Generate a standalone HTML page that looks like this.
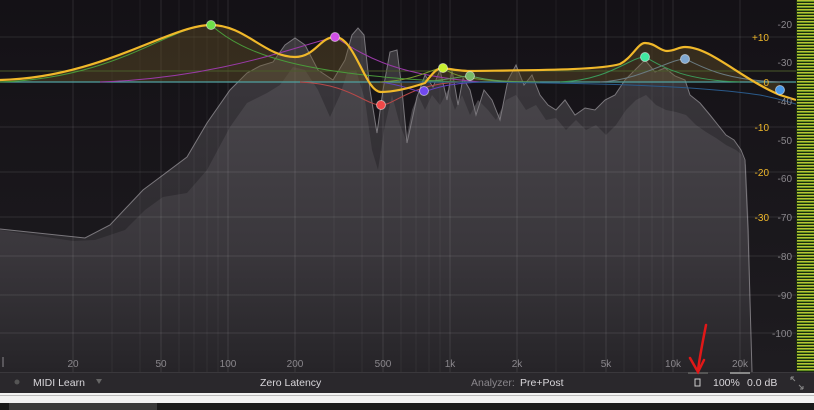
<!DOCTYPE html>
<html><head><style>
body{margin:0;width:814px;height:410px;overflow:hidden;background:#1c1a1e;font-family:"Liberation Sans",sans-serif}
svg{display:block}
</style></head><body>
<svg width="814" height="410" viewBox="0 0 814 410" xmlns="http://www.w3.org/2000/svg" font-family="Liberation Sans, sans-serif">
<defs>
<linearGradient id="bg" x1="0" y1="0" x2="0" y2="1"><stop offset="0" stop-color="#141116"/><stop offset="1" stop-color="#1e1c20"/></linearGradient>
<linearGradient id="pre" x1="0" y1="0" x2="0" y2="1"><stop offset="0" stop-color="#3c393e"/><stop offset="1" stop-color="#252327"/></linearGradient>
<linearGradient id="post" x1="0" y1="0" x2="0" y2="1"><stop offset="0" stop-color="#4a474c"/><stop offset="0.6" stop-color="#3a373c"/><stop offset="1" stop-color="#262428"/></linearGradient>
<linearGradient id="mt" x1="0" y1="0" x2="0" y2="1"><stop offset="0" stop-color="#c8b830"/><stop offset="0.35" stop-color="#b8c838"/><stop offset="0.7" stop-color="#6a9a22"/><stop offset="1" stop-color="#3d6a18"/></linearGradient>
<pattern id="ms" width="18" height="3" patternUnits="userSpaceOnUse"><rect width="18" height="2" fill="url(#mt)"/></pattern>
</defs>
<rect width="814" height="372" fill="url(#bg)"/>
<path d="M0 229 L85 238 L110 225 L143 190 L187 157 L207 123 L230 90 L247 73 L260 66 L273 62 L285 45 L295 38 L305 45 L318 70 L333 80 L345 60 L352 35 L358 28 L364 35 L370 90 L377 133 L383 90 L390 52 L397 50 L402 90 L407 143 L412 120 L417 97 L425 75 L433 87 L440 70 L447 100 L452 70 L458 105 L463 78 L470 90 L476 115 L484 90 L492 100 L500 120 L508 80 L516 65 L524 85 L532 75 L540 95 L548 105 L556 110 L565 100 L575 115 L585 108 L595 110 L605 100 L615 95 L625 80 L635 70 L645 60 L655 72 L665 68 L675 76 L685 80 L690 95 L700 103 L710 115 L718 125 L726 135 L734 140 L741 150 L745 160 L748 230 L752 372 L0 372 Z" fill="url(#pre)"/>
<path d="M0 230 L73 241 L95 240 L125 230 L145 210 L163 197 L187 193 L207 170 L230 127 L247 103 L267 93 L280 85 L293 67 L305 70 L318 90 L330 117 L340 95 L347 73 L356 70 L365 100 L372 150 L378 170 L384 130 L392 95 L400 125 L406 140 L412 110 L418 95 L425 110 L432 95 L440 105 L448 90 L455 110 L462 95 L470 115 L478 100 L488 110 L496 120 L506 100 L516 95 L526 110 L536 105 L546 120 L556 118 L566 130 L576 120 L586 130 L596 125 L606 135 L616 125 L626 110 L636 100 L646 95 L656 105 L666 110 L676 112 L686 115 L696 125 L706 132 L716 138 L726 145 L736 150 L742 155 L746 165 L749 230 L752 372 L0 372 Z" fill="url(#post)"/>
<path d="M0 229 L85 238 L110 225 L143 190 L187 157 L207 123 L230 90 L247 73 L260 66 L273 62 L285 45 L295 38 L305 45 L318 70 L333 80 L345 60 L352 35 L358 28 L364 35 L370 90 L377 133 L383 90 L390 52 L397 50 L402 90 L407 143 L412 120 L417 97 L425 75 L433 87 L440 70 L447 100 L452 70 L458 105 L463 78 L470 90 L476 115 L484 90 L492 100 L500 120 L508 80 L516 65 L524 85 L532 75 L540 95 L548 105 L556 110 L565 100 L575 115 L585 108 L595 110 L605 100 L615 95 L625 80 L635 70 L645 60 L655 72 L665 68 L675 76 L685 80 L690 95 L700 103 L710 115 L718 125 L726 135 L734 140 L741 150 L745 160 L748 230 L752 372" fill="none" stroke="#7a777c" stroke-width="1"/>
<g stroke="#ffffff" stroke-opacity="0.1" stroke-width="1">
<line x1="73" y1="0" x2="73" y2="372"/><line x1="161" y1="0" x2="161" y2="372"/><line x1="228" y1="0" x2="228" y2="372"/><line x1="295" y1="0" x2="295" y2="372"/><line x1="383" y1="0" x2="383" y2="372"/><line x1="450" y1="0" x2="450" y2="372"/><line x1="517" y1="0" x2="517" y2="372"/><line x1="606" y1="0" x2="606" y2="372"/><line x1="673" y1="0" x2="673" y2="372"/><line x1="740" y1="0" x2="740" y2="372"/>
<line x1="0" y1="37" x2="796" y2="37"/><line x1="0" y1="127" x2="796" y2="127"/><line x1="0" y1="172" x2="796" y2="172"/><line x1="0" y1="217" x2="796" y2="217"/><line x1="0" y1="256" x2="796" y2="256"/><line x1="0" y1="295" x2="796" y2="295"/><line x1="0" y1="333" x2="796" y2="333"/>
</g>
<g stroke="#ffffff" stroke-opacity="0.05" stroke-width="1">
<line x1="112" y1="0" x2="112" y2="372"/><line x1="140" y1="0" x2="140" y2="372"/><line x1="179" y1="0" x2="179" y2="372"/><line x1="194" y1="0" x2="194" y2="372"/><line x1="207" y1="0" x2="207" y2="372"/><line x1="218" y1="0" x2="218" y2="372"/><line x1="334" y1="0" x2="334" y2="372"/><line x1="362" y1="0" x2="362" y2="372"/><line x1="401" y1="0" x2="401" y2="372"/><line x1="416" y1="0" x2="416" y2="372"/><line x1="429" y1="0" x2="429" y2="372"/><line x1="440" y1="0" x2="440" y2="372"/><line x1="556" y1="0" x2="556" y2="372"/><line x1="584" y1="0" x2="584" y2="372"/><line x1="624" y1="0" x2="624" y2="372"/><line x1="639" y1="0" x2="639" y2="372"/><line x1="652" y1="0" x2="652" y2="372"/><line x1="663" y1="0" x2="663" y2="372"/>
</g>
<path d="M0 82 L0 80 C100 78 170 25 211 25 C245 25 265 57 295 57 C315 57 320 37 335 37 C355 37 365 92 381 92 C395 92 410 88 425 83 C435 70 438 68 443 68 C455 70 462 71 470 71 C540 70 600 70 620 64 C632 58 638 43 645 43 C655 43 660 51 667 51 C675 51 678 47 685 47 C710 47 740 78 780 95 L780 82 Z" fill="#6a5428" fill-opacity="0.4"/>
<path d="M0 71 L796 71" stroke="#4a5a2a" stroke-width="1"/>
<path d="M0 82 L796 82" stroke="#4fa0a0" stroke-width="1.2"/>
<path d="M0 82 C120 78 170 25 211 25 C245 55 300 75 460 82" stroke="#4a9a3a" fill="none"/>
<path d="M100 82 C220 78 300 45 335 37 C370 60 400 75 480 82" stroke="#9a3aa8" fill="none"/>
<path d="M300 82 C350 84 365 105 381 105 C395 105 410 84 460 82" stroke="#b84848" fill="none"/>
<path d="M380 82 C405 85 415 92 424 92 C435 88 445 84 480 82" stroke="#6040c0" fill="none"/>
<path d="M380 82 C420 80 432 68 443 68 C452 75 465 80 520 82" stroke="#7a9a30" fill="none"/>
<path d="M420 82 C450 80 460 76 470 76 C480 78 490 82 540 82" stroke="#5a9a5a" fill="none"/>
<path d="M560 82 C610 80 630 57 645 57 C660 65 680 80 740 82" stroke="#3a9a5a" fill="none"/>
<path d="M600 82 C640 80 670 59 685 59 C700 65 720 80 780 82" stroke="#6a7a80" fill="none"/>
<path d="M400 82 C600 82 700 86 760 95 C785 100 800 105 814 110" stroke="#2a5a8a" fill="none"/>
<path d="M0 80 C100 78 170 25 211 25 C245 25 265 57 295 57 C315 57 320 37 335 37 C355 37 365 92 381 92 C395 92 410 88 425 83 C435 70 438 68 443 68 C455 70 462 71 470 71 C540 70 600 70 620 64 C632 58 638 43 645 43 C655 43 660 51 667 51 C675 51 678 47 685 47 C710 47 740 78 780 95 L796 100" fill="none" stroke="#f0b82a" stroke-width="2.2"/>
<g stroke="#ffffff" stroke-opacity="0.5" stroke-width="1">
<circle cx="211" cy="25" r="4.5" fill="#6ee04a"/>
<circle cx="335" cy="37" r="4.5" fill="#d050e8"/>
<circle cx="381" cy="105" r="4.5" fill="#f04848"/>
<circle cx="424" cy="91" r="4.5" fill="#7048f0"/>
<circle cx="443" cy="68" r="4.5" fill="#c8f030"/>
<circle cx="470" cy="76" r="4.5" fill="#78b868"/>
<circle cx="645" cy="57" r="4.5" fill="#40e8a0"/>
<circle cx="685" cy="59" r="4.5" fill="#80a8d0"/>
<circle cx="780" cy="90" r="4.5" fill="#4898e8"/>
</g>
<g font-size="10" fill="#f0b82a" text-anchor="end">
<text x="769" y="41">+10</text><text x="769" y="86">0</text><text x="769" y="131">-10</text><text x="769" y="176">-20</text><text x="769" y="221">-30</text>
</g>
<g font-size="10" fill="#8a878c" text-anchor="end">
<text x="792" y="28">-20</text><text x="792" y="66">-30</text><text x="792" y="105">-40</text><text x="792" y="144">-50</text><text x="792" y="182">-60</text><text x="792" y="221">-70</text><text x="792" y="260">-80</text><text x="792" y="299">-90</text><text x="792" y="337">-100</text>
</g>
<rect x="796" y="0" width="18" height="372" fill="#1a2a10"/>
<rect x="797" y="0" width="17" height="372" fill="url(#ms)"/>
<g font-size="10" fill="#8a878c" text-anchor="middle">
<text x="73" y="367">20</text><text x="161" y="367">50</text><text x="228" y="367">100</text><text x="295" y="367">200</text><text x="383" y="367">500</text><text x="450" y="367">1k</text><text x="517" y="367">2k</text><text x="606" y="367">5k</text><text x="673" y="367">10k</text><text x="740" y="367">20k</text>
</g>
<line x1="3" y1="357" x2="3" y2="367" stroke="#8a878c"/>
<rect x="0" y="372" width="814" height="21" fill="#2a282c"/>
<line x1="0" y1="372.5" x2="814" y2="372.5" stroke="#3a383c"/>
<rect x="688" y="372" width="20" height="2" fill="#555"/><rect x="730" y="372" width="20" height="2" fill="#888"/>
<circle cx="17" cy="382" r="2.5" fill="#555"/>
<g font-size="10.5" fill="#d8d6da">
<text x="33" y="386">MIDI Learn</text>
<text x="260" y="386">Zero Latency</text>
<text x="471" y="386" fill="#8a878c">Analyzer:</text>
<text x="520" y="386">Pre+Post</text>
<text x="713" y="386">100%</text>
<text x="747" y="386">0.0 dB</text>
</g>
<path d="M96 379 L102 379 L99 384 Z" fill="#666"/>
<rect x="695" y="379" width="5" height="7" fill="none" stroke="#ccc"/>
<path d="M791 377 L795 381 M799 385 L803 389 M791 377 L791 380 M791 377 L794 377 M803 389 L800 389 M803 389 L803 386" stroke="#888" fill="none"/>
<path d="M706 325 C703 340 700 355 698 370 M690 358 L698 372 L704 360" stroke="#e01818" stroke-width="2.5" fill="none" stroke-linecap="round"/>
<rect x="0" y="393" width="814" height="10" fill="#f2f2f2"/>
<rect x="0" y="395" width="814" height="1" fill="#bbb"/>
<rect x="0" y="403" width="814" height="7" fill="#1a1a1a"/>
<rect x="9" y="403" width="148" height="7" fill="#3a3a3a"/>
</svg>
</body></html>
